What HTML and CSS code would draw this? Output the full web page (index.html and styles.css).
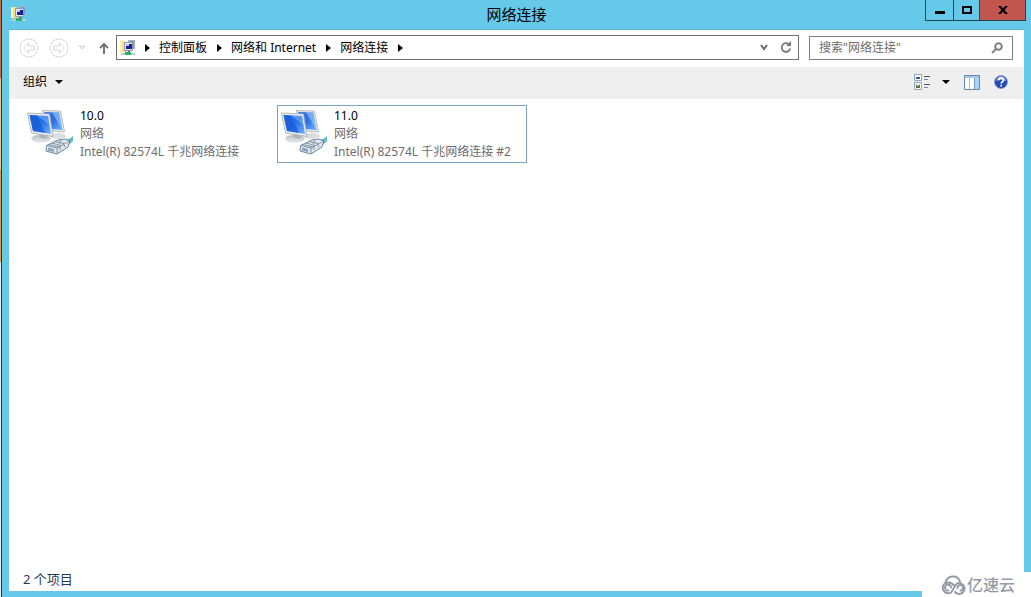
FILE: index.html
```html
<!DOCTYPE html>
<html lang="zh-CN">
<head>
<meta charset="utf-8">
<title>网络连接</title>
<link rel="stylesheet" href="styles.css">
</head>
<body>
<svg class="defs" aria-hidden="true">
  <defs>
    <linearGradient id="screen" x1="0" y1="0" x2="1" y2="1">
      <stop offset="0" stop-color="#2d6fe4"/><stop offset=".5" stop-color="#2a70e6"/><stop offset="1" stop-color="#6fb4f8"/>
    </linearGradient>
    <linearGradient id="stand" x1="0" y1="0" x2="0" y2="1">
      <stop offset="0" stop-color="#b4b9bb"/><stop offset="1" stop-color="#eceeed"/>
    </linearGradient>
    <symbol id="folder" viewBox="0 0 16 16">
      <path d="M0 1h5l1 1h3v10H0z" fill="#f3e08a"/>
      <path d="M0 2h2v10H0z" fill="#fbf2b4"/>
      <path d="M8 0h7v9H8z" fill="#a9b2c4"/>
      <path d="M10 1h4v7h-4z" fill="#7e93b8"/>
      <path d="M4.500 2.500h8v8h-8z" fill="#e6eaf2" stroke="#8f9ab0"/>
      <path d="M6 4h6v5H6z" fill="#16209c"/>
      <path d="M6 4h3v2H6z" fill="#b9c9f8"/>
      <path d="M8 11h2v3H8z" fill="#158a66"/>
      <path d="M1 14h14" stroke="#b7cfc9" stroke-width="2"/>
      <path d="M5 12h6v3H5z" fill="#2caf75"/>
    </symbol>
    <symbol id="adapter" viewBox="0 0 48 48">
      <ellipse cx="31" cy="29" rx="8" ry="3" fill="#dcdedd"/>
      <path d="M15 3.500L33.500 4 37.500 25 25 24z" fill="#e3e7e7" stroke="#a8afb4" stroke-width=".8"/>
      <path d="M17 5l15 .5L35.500 23 25 22z" fill="url(#screen)"/>
      <path d="M25 5.300l7 .2L35.500 23z" fill="#a4d0fb" opacity=".6"/>
      <ellipse cx="14" cy="31.500" rx="9.500" ry="3.500" fill="url(#stand)" stroke="#c4c8c8" stroke-width=".6"/>
      <path d="M12 27l7 1 1 4-7-1z" fill="#b0b6b8"/>
      <path d="M.5 6L22.500 7 26 29.500 4.500 26z" fill="#eceeee" stroke="#a9b0b5" stroke-width=".9"/>
      <path d="M2.500 8L21 9l3 18-18-3z" fill="url(#screen)"/>
      <path d="M2.500 8L10 8.400 18 26 6 24z" fill="#1257d6" opacity=".65"/>
      <path d="M10 8.400L21 9l1.500 9z" fill="#8dc0fa" opacity=".45"/>
      <path d="M37 33q5 0 9-4l0 5q-3 4-9 5z" fill="#68bbc9"/>
      <path d="M19.500 38.500L31 33l7-1 5 2-2 6-11 7-11-3z" fill="#dfe7ed" stroke="#60788b" stroke-width=".9"/>
      <path d="M20 38.500l10 2.500 12-6.500M30 41v5M22 37.500l10 2.500M25 36l9 2.500M28 34.500l9 2M34 33l-2 4M36 36l2 4M33 39v4" fill="none" stroke="#758c9e" stroke-width=".9"/>
      <path d="M21 40.500l6 1.500v3l-6-1.500z" fill="#91a5b5"/>
    </symbol>
  </defs>
</svg>
<div class="screen">
  <div class="desktop-edge"></div>
  <main class="window">
    <header class="titlebar">
      <svg class="icon16 title-icon"><use href="#folder"/></svg>
      <h1 class="title">网络连接</h1>
      <div class="caption-buttons">
        <button class="caption minimize" aria-label="最小化"><svg width="10" height="10"><path d="M0 6h10v3H0z"/></svg></button>
        <button class="caption maximize" aria-label="最大化"><svg width="10" height="8"><path d="M1 1h8v6H1z" fill="none" stroke="#000" stroke-width="2"/></svg></button>
        <button class="caption close" aria-label="关闭"><svg width="10" height="8"><path d="M0 0h3l2 2.500 2-2.500h3L6.500 4 10 8H7L5 5.500 3 8H0l3.500-4z"/></svg></button>
      </div>
    </header>
    <div class="client">
      <nav class="navbar">
        <button class="plain round" aria-label="后退"><svg width="20" height="20" viewBox="0 0 20 20" fill="none" stroke="#d9d9d9"><circle cx="10" cy="10" r="9"/><path d="M4.500 10l5-5v3h6v4h-6v3z"/></svg></button>
        <button class="plain round" aria-label="前进"><svg width="20" height="20" viewBox="0 0 20 20" fill="none" stroke="#d9d9d9"><circle cx="10" cy="10" r="9"/><path d="M15.500 10l-5-5v3h-6v4h6v3z"/></svg></button>
        <button class="plain recent" aria-label="最近位置"><svg width="8" height="5"><path d="M1 1h6L4 4z" fill="#f0f0f0" stroke="#d0d0d0"/></svg></button>
        <button class="plain up" aria-label="上移"><svg width="10" height="12" fill="none" stroke="#777" stroke-width="2"><path d="M5 12V2M1 6l4-4 4 4"/></svg></button>
        <div class="address">
          <svg class="icon16"><use href="#folder"/></svg>
          <ol class="crumbs">
            <li><a href="#">控制面板</a></li>
            <li><a href="#">网络和 Internet</a></li>
            <li><a href="#">网络连接</a></li>
          </ol>
          <button class="plain history" aria-label="历史记录"><svg width="8" height="7" fill="none" stroke="#666" stroke-width="2"><path d="M1 1l3 4 3-4"/></svg></button>
          <button class="plain" aria-label="刷新"><svg width="12" height="13" viewBox="0 0 12 13"><path d="M9.500 4A4.300 4.300 0 1 0 10.200 7.500" fill="none" stroke="#777" stroke-width="1.800"/><path d="M6 5h5V0z" fill="#777"/></svg></button>
        </div>
        <label class="search">
          <input class="search-input" type="text" aria-label="搜索" placeholder='搜索"网络连接"'>
          <svg width="12" height="12" fill="none" stroke="#808080" stroke-width="2"><circle cx="7.500" cy="4.500" r="3.300"/><path d="M5 7l-4 4"/></svg>
        </label>
      </nav>
      <div class="toolbar">
        <button class="plain organize">组织<span class="arrow-down"></span></button>
        <div class="tools">
          <button class="plain view" aria-label="更改视图">
            <svg width="16" height="16" viewBox="0 0 16 16"><path d="M.5.500h7v6h-7zM.5 8.500h7v7h-7z" fill="#fff" stroke="#8da5bd"/><path d="M2 3h4v2H2z" fill="#2c62a8"/><path d="M2 13v-3l2 2 2-2v4H2z" fill="#4d7c3c"/><path d="M10 2.500h6M10 10.500h6" stroke="#555"/><path d="M10 5.500h4M10 13.500h4" stroke="#7783b8"/></svg>
            <span class="arrow-down"></span>
          </button>
          <button class="plain" aria-label="预览窗格"><svg width="16" height="15"><path d="M.5.500h15v14H.5z" fill="#fff" stroke="#6689ad"/><path d="M1 1h14v2H1z" fill="#a5cbe8"/><path d="M5.500 3v11" stroke="#a8bccd"/><path d="M11 3h4v11h-4z" fill="#a4d6f8"/><path d="M10.500 3v11" stroke="#6fa3d0"/></svg></button>
          <button class="plain" aria-label="帮助"><svg width="14" height="14" viewBox="0 0 14 14"><circle cx="7" cy="7" r="6.500" fill="#2448b4" stroke="#8c9dcb"/><path d="M2 6a5 5 0 0 1 10 0q-5-2-10 0" fill="#7592de"/><path d="M4.700 5.300C4.700 2.300 9.500 2.400 9.500 5c0 1.700-2.300 1.700-2.300 3.400M7.200 9.700v1.800" fill="none" stroke="#fff" stroke-width="1.700"/></svg></button>
        </div>
      </div>
      <ul class="connections">
        <li class="connection">
          <svg class="adapter"><use href="#adapter"/></svg>
          <div class="details"><span class="name">10.0</span><span>网络</span><span>Intel(R) 82574L 千兆网络连接</span></div>
        </li>
        <li class="connection focused">
          <svg class="adapter"><use href="#adapter"/></svg>
          <div class="details"><span class="name">11.0</span><span>网络</span><span>Intel(R) 82574L 千兆网络连接 #2</span></div>
        </li>
      </ul>
      <footer class="status">2 个项目</footer>
    </div>
  </main>
  <div class="watermark">
    <svg width="27" height="20" viewBox="0 0 27 20" fill="none" stroke="#959ba5" stroke-width="2" stroke-linecap="round"><path d="M5.500 8A7.500 7.500 0 0 1 20 6.500"/><path d="M14 10.500C12 7.500 8.500 7 5.500 8A5.400 5.400 0 1 0 11 17.500C13 15.500 14 11 17 8.500A5.400 5.400 0 1 1 15 17"/><path d="M11 12.500a3 3 0 1 0-2.500 3M17.500 13a2.800 2.800 0 1 1 3 2.500"/></svg>
    <span>亿速云</span>
  </div>
</div>
</body>
</html>
```
FILE: styles.css
```css
* { box-sizing: border-box; }

body {
  margin: 0;
  font-family: "Noto Sans", "Noto Sans CJK SC", sans-serif;
  font-size: 12px;
  line-height: 18px;
  color: #000;
}

svg { display: block; flex: none; }
.defs { position: absolute; width: 0; height: 0; }
ul, ol { margin: 0; padding: 0; list-style: none; }
a { color: inherit; text-decoration: none; }

button, input { font: inherit; color: inherit; }

.plain {
  display: flex;
  align-items: center;
  padding: 0;
  border: 0;
  background: none;
}

.screen {
  position: relative;
  display: flex;
  min-height: 100vh;
  overflow: hidden;
}

.desktop-edge {
  width: 2px;
  border-right: 1px solid #333;
  background: linear-gradient(#c4683e 0 78px, #e8c880 78px 170px, #d99a38 170px 262px, #e8eeee 262px);
}

.window {
  flex: 1;
  display: flex;
  flex-direction: column;
  padding: 0 7px 6px;
  background: #66c9e9;
}

.titlebar {
  display: grid;
  grid-template-columns: 1fr auto 1fr;
  height: 30px;
  border-bottom: 1px solid #5fb4d0;
}

.icon16 { width: 16px; height: 16px; }
.title-icon { margin: 6px 2px; }

.title {
  margin: 0;
  padding-top: 4px;
  font-size: 15px;
  line-height: 20px;
  font-weight: 400;
}

.caption-buttons {
  display: flex;
  justify-self: end;
  height: 21px;
  margin-right: -2px;
}

.caption {
  display: grid;
  place-items: center;
  width: 29px;
  padding: 0;
  border: 1px solid #25464f;
  border-top: 0;
  background: #66c9e9;
}
.maximize { width: 26px; border-left: 0; }
.close { width: 46px; border-left: 0; background: #c2554e; }

.client {
  flex: 1;
  display: flex;
  flex-direction: column;
  background: #fff;
}

.navbar {
  display: flex;
  align-items: center;
  height: 37px;
  padding: 0 11px 2px 10px;
}
.round { margin-right: 10px; }
.recent { margin-right: 13px; margin-left: -1px; }
.up { margin-right: 7px; }

.address {
  flex: 1;
  display: flex;
  align-items: center;
  height: 25px;
  padding: 0 6px 0 3px;
  border: 1px solid #707070;
}

.crumbs { flex: 1; display: flex; }
.crumbs li { display: flex; align-items: center; }
.crumbs li::before,
.crumbs li:last-child::after {
  content: "";
  margin: 0 9px 0 10px;
  border: 4px solid transparent;
  border-left: 5px solid #000;
  border-right: 0;
}
.crumbs li:first-child::before { margin-left: 9px; }
.history { margin-right: 12px; }

.search {
  display: flex;
  align-items: center;
  width: 204px;
  height: 24px;
  margin-left: 10px;
  padding: 0 9px;
  border: 1px solid #808080;
}
.search-input {
  flex: 1;
  min-width: 0;
  padding: 0;
  border: 0;
  outline: 0;
  background: none;
}
.search-input::placeholder { color: #6d6d6d; opacity: 1; }

.toolbar {
  display: flex;
  align-items: center;
  justify-content: space-between;
  height: 32px;
  padding: 0 16px 2px 14px;
  background: #efefef;
}
.organize { gap: 8px; }
.arrow-down {
  border: 4px solid transparent;
  border-top-color: #000;
  border-bottom: 0;
}
.tools { display: flex; align-items: center; gap: 14px; }
.view { gap: 12px; }

.connections {
  flex: 1;
  display: flex;
  flex-wrap: wrap;
  align-content: flex-start;
  gap: 4px;
  padding: 6px 14px;
}

.connection {
  display: flex;
  gap: 5px;
  width: 250px;
  height: 58px;
  padding: 1px 3px;
  border: 1px solid transparent;
  color: #6d6d6d;
}
.focused { border-color: #7da2c4; }
.adapter { width: 48px; height: 48px; }
.details { display: flex; flex-direction: column; white-space: nowrap; }
.name { color: #000; }

.status {
  padding: 0 14px 3px;
  font-size: 13px;
  color: #1e395b;
}

.watermark {
  position: absolute;
  right: 0;
  bottom: 0;
  display: flex;
  align-items: center;
  width: 109px;
  height: 25px;
  padding-left: 18px;
  background: #fff;
  color: #959ba5;
  font-size: 16px;
  font-weight: 500;
}
```
